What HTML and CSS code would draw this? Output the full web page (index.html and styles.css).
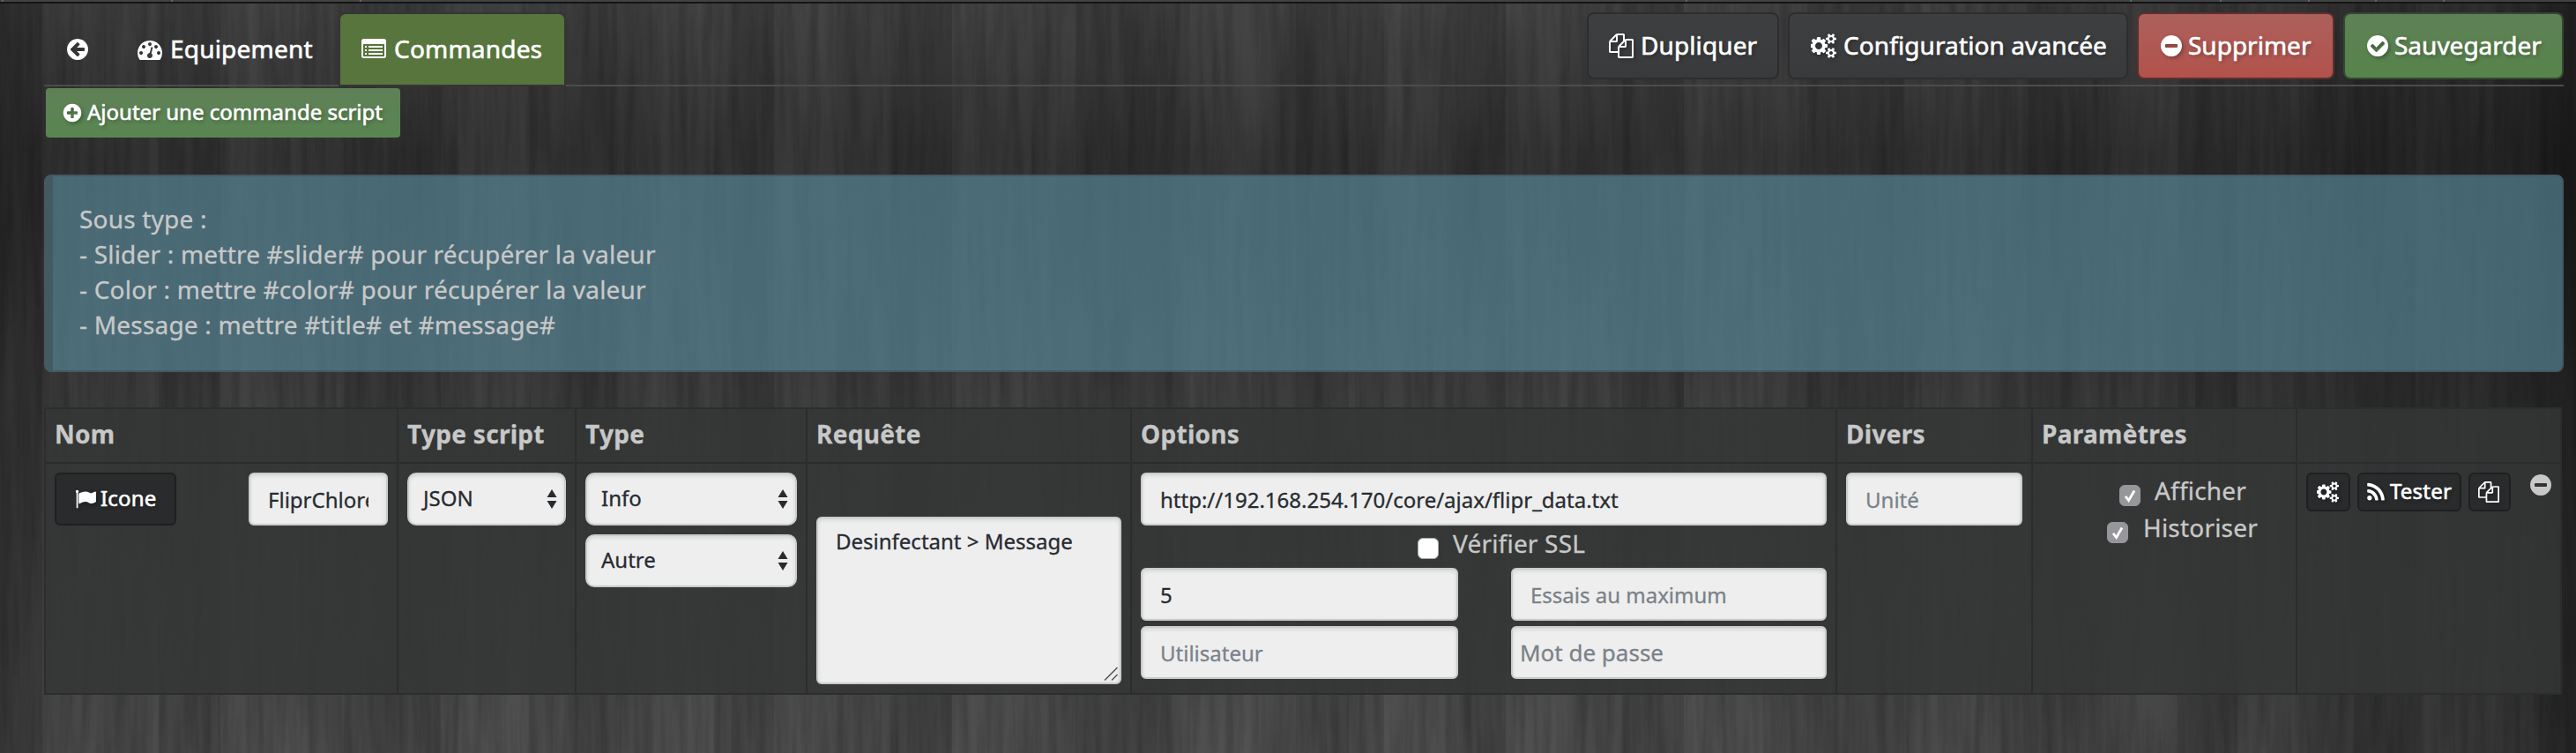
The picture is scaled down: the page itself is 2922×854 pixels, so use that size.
FILE: index.html
```html
<!DOCTYPE html>
<html lang="fr">
<head>
<meta charset="utf-8">
<title>Commandes script</title>
<link rel="stylesheet" href="styles.css">
</head>
<body>
<svg class="defs" width="0" height="0">
  <symbol id="arrow-left" viewBox="0 0 1792 1792"><path d="M1408 960v-128q0-26-19-45t-45-19h-502l189-189q19-19 19-45t-19-45l-91-91q-18-18-45-18t-45 18l-362 362-91 91q-18 18-18 45t18 45l91 91 362 362q18 18 45 18t45-18l91-91q18-18 18-45t-18-45l-189-189h502q26 0 45-19t19-45zm256-64q0 209-103 385.500t-279.500 279.500-385.500 103-385.500-103-279.500-279.500-103-385.500 103-385.500 279.500-279.500 385.500-103 385.500 103 279.500 279.500 103 385.500z"/></symbol>
  <symbol id="plus" viewBox="0 0 1792 1792"><path d="M1344 960v-128q0-26-19-45t-45-19h-256v-256q0-26-19-45t-45-19h-128q-26 0-45 19t-19 45v256h-256q-26 0-45 19t-19 45v128q0 26 19 45t45 19h256v256q0 26 19 45t45 19h128q26 0 45-19t19-45v-256h256q26 0 45-19t19-45zm320-64q0 209-103 385.500t-279.500 279.500-385.500 103-385.500-103-279.500-279.500-103-385.500 103-385.500 279.500-279.500 385.500-103 385.500 103 279.500 279.500 103 385.500z"/></symbol>
  <symbol id="minus" viewBox="0 0 1792 1792"><path d="M1344 960v-128q0-26-19-45t-45-19h-768q-26 0-45 19t-19 45v128q0 26 19 45t45 19h768q26 0 45-19t19-45zm320-64q0 209-103 385.500t-279.500 279.500-385.500 103-385.500-103-279.500-279.500-103-385.500 103-385.500 279.500-279.500 385.500-103 385.500 103 279.500 279.500 103 385.500z"/></symbol>
  <symbol id="check" viewBox="0 0 1792 1792"><path d="M1412 734q0-28-18-46l-91-90q-19-19-45-19t-45 19l-408 407-226-226q-19-19-45-19t-45 19l-91 90q-18 18-18 46 0 27 18 45l362 362q19 19 45 19 27 0 46-19l543-543q18-18 18-45zm252 162q0 209-103 385.500t-279.500 279.500-385.500 103-385.500-103-279.500-279.500-103-385.500 103-385.500 279.500-279.500 385.500-103 385.500 103 279.500 279.500 103 385.500z"/></symbol>
  <symbol id="files" viewBox="0 0 1792 1792"><path d="M1696 384q40 0 68 28t28 68v1216q0 40-28 68t-68 28h-960q-40 0-68-28t-28-68v-288h-544q-40 0-68-28t-28-68v-672q0-40 20-88t48-76l408-408q28-28 76-48t88-20h416q40 0 68 28t28 68v328q68-40 128-40h416zm-544 213l-299 299h299v-299zm-640-384l-299 299h299v-299zm196 647l316-316v-416h-384v416q0 40-28 68t-68 28h-416v640h512v-256q0-40 20-88t48-76zm956 804v-1152h-384v416q0 40-28 68t-68 28h-416v640h896z"/></symbol>
  <symbol id="cogs" viewBox="0 0 1920 1792"><path d="M832 896q0-106-75-181t-181-75-181 75-75 181 75 181 181 75 181-75 75-181zm768 512q0-52-38-90t-90-38-90 38-38 90q0 53 37.500 90.500t90.500 37.500 90.500-37.500 37.500-90.500zm0-1024q0-52-38-90t-90-38-90 38-38 90q0 53 37.500 90.500t90.500 37.500 90.500-37.500 37.500-90.500zm-384 421v185q0 10-7 19.500t-16 10.500l-155 24q-11 35-32 76 34 48 90 115 7 11 7 20 0 12-7 19-23 30-82.500 89.500t-78.500 59.500q-11 0-21-7l-115-90q-37 19-77 31-11 108-23 155-7 24-30 24h-186q-11 0-20-7.500t-10-17.500l-23-153q-34-10-75-31l-118 89q-7 7-20 7-11 0-21-8-144-133-144-160 0-9 7-19 10-14 41-53t47-61q-23-44-35-82l-152-24q-10-1-17-9.500t-7-19.500v-185q0-10 7-19.500t16-10.500l155-24q11-35 32-76-34-48-90-115-7-11-7-20 0-12 7-20 22-30 82-89t79-59q11 0 21 7l115 90q34-18 77-32 11-108 23-154 7-24 30-24h186q11 0 20 7.500t10 17.500l23 153q34 10 75 31l118-89q8-7 20-7 11 0 21 8 144 133 144 160 0 8-7 19-12 16-42 54t-45 60q23 48 34 82l152 23q10 2 17 10.500t7 19.500zm640 533v140q0 16-149 31-12 27-30 52 51 113 51 138 0 4-4 7-122 71-124 71-8 0-46-47t-52-68q-20 2-30 2t-30-2q-14 21-52 68t-46 47q-2 0-124-71-4-3-4-7 0-25 51-138-18-25-30-52-149-15-149-31v-140q0-16 149-31 13-29 30-52-51-113-51-138 0-4 4-7 4-2 35-20t59-34 30-16q8 0 46 46.500t52 67.500q20-2 30-2t30 2q51-71 92-112l6-2q4 0 124 70 4 3 4 7 0 25-51 138 17 23 30 52 149 15 149 31zm0-1024v140q0 16-149 31-12 27-30 52 51 113 51 138 0 4-4 7-122 71-124 71-8 0-46-47t-52-68q-20 2-30 2t-30-2q-14 21-52 68t-46 47q-2 0-124-71-4-3-4-7 0-25 51-138-18-25-30-52-149-15-149-31v-140q0-16 149-31 13-29 30-52-51-113-51-138 0-4 4-7 4-2 35-20t59-34 30-16q8 0 46 46.500t52 67.500q20-2 30-2t30 2q51-71 92-112l6-2q4 0 124 70 4 3 4 7 0 25-51 138 17 23 30 52 149 15 149 31z"/></symbol>
  <symbol id="gauge" viewBox="0 0 1792 1792"><path d="M384 1152q0-53-37.500-90.500t-90.500-37.500-90.500 37.500-37.500 90.500 37.500 90.500 90.500 37.500 90.500-37.500 37.500-90.500zm192-448q0-53-37.500-90.500t-90.500-37.500-90.500 37.500-37.500 90.500 37.500 90.500 90.500 37.500 90.500-37.500 37.500-90.500zm428 481l101-382q6-26-7.500-48.500t-38.500-29.500-48 6.500-30 39.500l-101 382q-60 5-107 43.500t-63 98.500q-20 77 20 146t117 89 146-20 89-117q16-60-6-117t-72-91zm660-33q0-53-37.500-90.500t-90.500-37.500-90.500 37.500-37.500 90.500 37.500 90.500 90.500 37.500 90.500-37.500 37.500-90.500zm-640-640q0-53-37.500-90.500t-90.500-37.500-90.500 37.500-37.500 90.500 37.500 90.500 90.500 37.500 90.500-37.500 37.500-90.500zm448 192q0-53-37.500-90.500t-90.500-37.500-90.500 37.500-37.500 90.500 37.500 90.500 90.500 37.500 90.500-37.500 37.500-90.500zm320 448q0 261-141 483-19 29-54 29h-1402q-35 0-54-29-141-221-141-483 0-182 71-348t191-286 286-191 348-71 348 71 286 191 191 286 71 348z"/></symbol>
  <symbol id="list" viewBox="0 0 1792 1792"><path fill-rule="evenodd" d="M160 128h1472q66 0 113 47t47 113v1088q0 66-47 113t-113 47h-1472q-66 0-113-47t-47-113v-1088q0-66 47-113t113-47zm0 384q-32 0-32 32v832q0 32 32 32h1472q32 0 32-32v-832q0-32-32-32z"/><path d="M256 640h128v128h-128zM256 896h128v128h-128zM256 1152h128v128h-128zM512 640h1024v128h-1024zM512 896h1024v128h-1024zM512 1152h1024v128h-1024z"/></symbol>
  <symbol id="flag" viewBox="0 0 1792 1792"><path d="M320 256q0 72-64 110v1266q0 13-9.500 22.500t-22.500 9.500h-64q-13 0-22.500-9.500t-9.500-22.500v-1266q-64-38-64-110 0-53 37.500-90.500t90.500-37.500 90.500 37.500 37.500 90.500zm1472 64v763q0 25-12.500 38.500t-39.500 27.500q-215 116-369 116-61 0-123.500-22t-108.500-48-115.500-48-142.500-22q-192 0-464 146-17 9-33 9-26 0-45-19t-19-45v-742q0-32 31-55 21-14 79-43 236-120 421-120 107 0 200 29t219 88q38 19 88 19 54 0 117.500-21t110-47 88-47 54.500-21q26 0 45 19t19 45z"/></symbol>
  <symbol id="rss" viewBox="192 0 1408 1792"><path d="M576 1344q0 80-56 136t-136 56-136-56-56-136 56-136 136-56 136 56 56 136zm512 123q2 28-17 48-18 21-47 21h-135q-25 0-43-16.500t-20-41.500q-22-229-184.500-391.500t-391.500-184.500q-25-2-41.500-20t-16.500-43v-135q0-29 21-47 17-17 43-17h5q160 13 306 80.500t259 181.500q114 113 181.500 259t80.500 306zm512 2q2 27-18 47-18 20-46 20h-143q-26 0-44.500-17.500t-19.500-42.500q-12-215-101-408.500t-231.500-336-336-231.500-408.500-102q-25-1-42.500-19.500t-17.500-43.500v-143q0-28 20-46 18-18 44-18h3q262 13 501.500 120t425.500 294q187 186 294 425.500t120 501.500z"/></symbol>
</svg>

<svg class="wood" width="2922" height="854" viewBox="0 0 2922 854">
  <defs>
    <linearGradient id="shade" x1="0" y1="0" x2="0" y2="1">
      <stop offset="0" stop-color="#3f3f3f"/><stop offset=".1" stop-color="#383838"/><stop offset=".2" stop-color="#313131"/>
      <stop offset=".3" stop-color="#323232"/><stop offset=".52" stop-color="#3b3b3b"/><stop offset=".8" stop-color="#434343"/><stop offset="1" stop-color="#494949"/>
    </linearGradient>
    <linearGradient id="sides" x1="0" y1="0" x2="1" y2="0">
      <stop offset="0" stop-color="#000" stop-opacity=".2"/><stop offset=".02" stop-color="#000" stop-opacity=".12"/><stop offset=".06" stop-color="#000" stop-opacity=".02"/>
      <stop offset=".7" stop-color="#000" stop-opacity="0"/><stop offset=".85" stop-color="#000" stop-opacity=".13"/><stop offset=".98" stop-color="#000" stop-opacity=".34"/><stop offset="1" stop-color="#000" stop-opacity=".45"/>
    </linearGradient>
    <filter id="grain" x="0" y="0" width="1" height="1" color-interpolation-filters="sRGB">
      <feTurbulence type="fractalNoise" baseFrequency=".1 .006" numOctaves="4" seed="7"/>
      <feColorMatrix values="0 0 0 0 0  0 0 0 0 0  0 0 0 0 0  .36 0 0 0 -.12"/>
    </filter>
    <filter id="glow" x="0" y="0" width="1" height="1" color-interpolation-filters="sRGB">
      <feTurbulence type="fractalNoise" baseFrequency=".03 .003" numOctaves="3" seed="23"/>
      <feColorMatrix values="0 0 0 0 1  0 0 0 0 1  0 0 0 0 1  .08 0 0 0 -.035"/>
    </filter>
    <pattern id="planks" width="830" height="854" patternUnits="userSpaceOnUse">
      <path fill="#000" fill-opacity=".08" d="M0 0h48v854H0zM180 0h70v854h-70zM390 0h110v854H390zM640 0h60v854h-60z"/>
      <path fill="#fff" fill-opacity=".018" d="M48 0h70v854H48zM250 0h90v854h-90zM520 0h80v854h-80zM740 0h70v854h-70z"/>
    </pattern>
  </defs>
  <rect width="2922" height="854" fill="url(#shade)"/>
  <rect width="2922" height="854" fill="url(#planks)"/>
  <rect width="2922" height="854" filter="url(#grain)"/>
  <rect width="2922" height="854" filter="url(#glow)"/>
  <rect width="2922" height="854" fill="url(#sides)"/>
  <path fill="#414342" d="M0 0h2922v2H0z"/><path fill="#151515" d="M0 2h2922v2H0z"/>
  <path fill="#656565" d="M2 0h2v2h-2zM194 0h2v2h-2zM408 0h2v2h-2zM1912 0h2v2h-2zM2416 0h2v2h-2zM2518 0h2v2h-2zM2618 0h2v2h-2zM2694 0h2v2h-2zM2771 0h2v2h-2z"/>
</svg>

<main class="page">
  <header class="topbar">
    <nav class="tabs">
      <a class="tab tab-back"><svg class="ico"><use href="#arrow-left"/></svg></a>
      <a class="tab tab-equip"><svg class="ico"><use href="#gauge"/></svg><span>Equipement</span></a>
      <a class="tab active"><svg class="ico"><use href="#list"/></svg><span>Commandes</span></a>
    </nav>
    <div class="actions">
      <a class="btn big w-dup"><svg class="ico"><use href="#files"/></svg><span>Dupliquer</span></a>
      <a class="btn big w-conf"><svg class="ico wide"><use href="#cogs"/></svg><span>Configuration avancée</span></a>
      <a class="btn big danger w-sup"><svg class="ico round"><use href="#minus"/></svg><span>Supprimer</span></a>
      <a class="btn big success w-sauv"><svg class="ico round"><use href="#check"/></svg><span>Sauvegarder</span></a>
    </div>
  </header>

  <a class="btn success add"><svg class="ico round"><use href="#plus"/></svg><span>Ajouter une commande script</span></a>

  <section class="alert">
    Sous type :<br>
    - Slider : mettre #slider# pour récupérer la valeur<br>
    - Color : mettre #color# pour récupérer la valeur<br>
    - Message : mettre #title# et #message#
  </section>

  <section class="table">
    <div class="th">Nom</div><div class="th">Type script</div><div class="th">Type</div><div class="th">Requête</div>
    <div class="th">Options</div><div class="th">Divers</div><div class="th">Paramètres</div><div class="th last"></div>

    <div class="td name">
      <a class="btn icone"><svg class="ico"><use href="#flag"/></svg><span>Icone</span></a>
      <div class="field name-field"><span class="clip">FliprChlore</span></div>
    </div>
    <div class="td">
      <div class="field select"><span>JSON</span><svg class="arrows" viewBox="0 0 12 22"><path d="M6 0l5.500 9H.5zM6 22l5.500-9H.5z"/></svg></div>
    </div>
    <div class="td stack">
      <div class="field select"><span>Info</span><svg class="arrows" viewBox="0 0 12 22"><path d="M6 0l5.500 9H.5zM6 22l5.500-9H.5z"/></svg></div>
      <div class="field select"><span>Autre</span><svg class="arrows" viewBox="0 0 12 22"><path d="M6 0l5.500 9H.5zM6 22l5.500-9H.5z"/></svg></div>
    </div>
    <div class="td request">
      <div class="field area"><span>Desinfectant &gt; Message</span><svg class="grip" viewBox="0 0 16 16"><path d="M1 15.500L15.500 1M9 15.500L15.500 9"/></svg></div>
    </div>
    <div class="td">
      <div class="field">http://192.168.254.170/core/ajax/flipr_data.txt</div>
      <label class="check ssl"><i class="box"></i><span>Vérifier SSL</span></label>
      <div class="pairs">
        <div class="field">5</div><div class="field hint">Essais au maximum</div>
        <div class="field hint">Utilisateur</div><div class="field hint password">Mot de passe</div>
      </div>
    </div>
    <div class="td"><div class="field hint unit">Unité</div></div>
    <div class="td params">
      <label class="check show"><i class="box on"><svg viewBox="0 0 24 24"><path d="M6.500 13l4 5 7-12"/></svg></i><span>Afficher</span></label>
      <label class="check hist"><i class="box on"><svg viewBox="0 0 24 24"><path d="M6.500 13l4 5 7-12"/></svg></i><span>Historiser</span></label>
    </div>
    <div class="td last tools">
      <a class="btn xs w-cog"><svg class="ico wide"><use href="#cogs"/></svg></a>
      <a class="btn xs w-test"><svg class="ico rss"><use href="#rss"/></svg><span>Tester</span></a>
      <a class="btn xs w-copy"><svg class="ico"><use href="#files"/></svg></a>
      <svg class="remove"><use href="#minus"/></svg>
    </div>
  </section>
</main>
</body>
</html>
```

FILE: styles.css
```css
* { box-sizing: border-box; }
body {
  margin: 0;
  width: 2922px;
  height: 854px;
  overflow: hidden;
  position: relative;
  background: #333;
  font: 28px/40px "Noto Sans", "Open Sans", sans-serif;
  letter-spacing: .2px;
  -webkit-text-stroke: .3px currentColor;
  color: #c8c8c8;
}
.defs { position: absolute; }
.wood { position: absolute; left: 0; top: 0; }
.page { position: relative; padding: 14px 14px 0 50px; }

.topbar {
  display: flex;
  justify-content: space-between;
  height: 84px;
  background: linear-gradient(#4c4c4c, #4c4c4c) left bottom / 100% 2px no-repeat;
}
.tabs { display: flex; height: 84px; }
.tab {
  display: flex;
  align-items: center;
  color: #fff;
  white-space: nowrap;
  height: 82px;
  padding-top: 2px;
}
.tab-back { padding-left: 24px; width: 106px; }
.tab-equip { width: 228px; }
.tab span { margin: 0 0 2px 9px; -webkit-text-stroke-width: .6px; }
.tab.active {
  width: 258px;
  height: 84px;
  padding: 0 0 0 24px;
  background: #57753c;
  border: 2px solid #353535;
  border-radius: 8px 8px 0 0;
}

.ico { width: 28px; height: 28px; fill: currentColor; flex: none; display: block; }
.ico.wide { width: 30px; }
.btn {
  display: flex;
  align-items: center;
  color: #fff;
  white-space: nowrap;
  border-radius: 8px;
  text-shadow: 2px 2px 4px rgba(0, 0, 0, .3);
  -webkit-text-stroke-width: .6px;
}
.btn .ico { filter: drop-shadow(2px 2px 2px rgba(0, 0, 0, .3)); }
.actions { display: flex; gap: 10px; }
.big {
  height: 76px;
  padding: 0 0 1px 23px;
  border: 2px solid #2c2d2e;
  background: linear-gradient(#3d3f41, #393a3c);
  letter-spacing: .1px;
}
.big span { margin: 0 0 2px 8px; }
.big .round + span { margin-left: 5px; }
.w-dup { width: 218px; }
.w-conf { width: 386px; padding-left: 24px; }
.w-conf span { margin-left: 7px; }
.w-sup { width: 224px; }
.w-sauv { width: 250px; }
.w-sup, .w-sauv { letter-spacing: 0; }
.big.danger { background: linear-gradient(#ad605c, #b2524b); border-color: #5b302e; }
.big.success { background: linear-gradient(#5f8057, #56844a); border-color: #354732; }

.add {
  margin: 2px 0 0 2px;
  width: 402px;
  height: 56px;
  font-size: 24px;
  letter-spacing: 0;
  padding-left: 18px;
  border-radius: 4px;
  background: linear-gradient(#5f8057, #598651);
}
.add .ico { width: 24px; height: 24px; }
.add span { margin: 0 0 3px 5px; }

.alert {
  margin-top: 42px;
  height: 224px;
  border: 2px solid #435a60;
  border-left-width: 10px;
  border-radius: 8px;
  background: rgba(88, 137, 155, .66);
  padding: 28px 30px;
  white-space: nowrap;
}

.table {
  margin-top: 40px;
  width: 2856px;
  height: 326px;
  display: grid;
  grid-template-columns: 400px 202px 262px 368px 800px 222px 300px 298px;
  grid-template-rows: 62px 260px;
  border: 2px solid #2c2e2d;
  background: rgba(52, 55, 53, .86);
}
.th, .td { border-right: 2px solid #2b2d2c; padding: 10px; min-width: 0; }
.th { border-bottom: 2px solid #2b2d2c; font-weight: bold; white-space: nowrap; padding-top: 8px; letter-spacing: .3px; }
.last { border-right: 0; }

.field {
  height: 60px;
  border: 2px solid #c9cccb;
  border-radius: 6px;
  background: #eee;
  box-shadow: inset 0 2px 4px rgba(0, 0, 0, .1);
  color: #272b30;
  font-size: 24px;
  letter-spacing: 0;
  line-height: 58px;
  padding: 0 20px;
  white-space: nowrap;
}
.hint { color: #7a8288; }
.name { display: flex; justify-content: space-between; }
.icone {
  width: 138px;
  height: 60px;
  padding-left: 21px;
  font-size: 24px;
  border: 2px solid #1e1f20;
  background: #2a2b2d;
  border-radius: 6px;
}
.icone .ico { width: 24px; height: 24px; }
.icone span { margin: 0 0 2px 5px; }
.name-field { width: 158px; }
.clip { display: block; overflow: hidden; }
.select { display: flex; justify-content: space-between; border-radius: 10px; padding: 0 8px 0 16px; line-height: 53px; }
.arrows { width: 12px; height: 22px; margin-top: 17px; fill: #272b30; }
.stack { display: flex; flex-direction: column; gap: 10px; }
.request { padding-top: 60px; }
.area { height: 190px; display: flex; justify-content: space-between; align-items: flex-end; padding-right: 2px; line-height: 52px; }
.area span { align-self: flex-start; }
.grip { width: 16px; height: 16px; stroke: #555; stroke-width: 1.500; fill: none; margin-bottom: 2px; }

.check { display: flex; align-items: flex-start; white-space: nowrap; }
.box { width: 24px; height: 24px; border-radius: 6px; background: #fff; border: 1px solid #aaa; margin-top: 14px; flex: none; }
.box.on { background: #97969b; border-color: #97969b; }
.box svg { display: block; width: 22px; height: 22px; fill: none; stroke: #fff; stroke-width: 3; }
.ssl { height: 48px; padding-left: 314px; }
.ssl span { margin-left: 16px; }
.pairs { display: grid; grid-template-columns: 360px 358px; column-gap: 60px; row-gap: 6px; }
.password { padding-left: 8px; font-size: 26px; line-height: 56px; }
.unit { width: 200px; }
.params { padding: 10px 0 0; }
.params .check { height: 42px; }
.params span { margin-left: 16px; }
.show { padding-left: 98px; }
.hist { padding-left: 84px; }
.params .hist span { margin-left: 17px; }

.tools { display: flex; align-items: flex-start; padding-right: 0; }
.xs { height: 44px; font-size: 24px; padding-left: 10px; border: 2px solid #1e1f20; background: #2a2b2d; border-radius: 6px; margin-right: 8px; }
.xs .ico { width: 24px; height: 24px; }
.xs .ico.wide { width: 26px; }
.xs .ico.rss { width: 20px; height: 25px; margin-left: -1px; }
.xs span { margin: 0 0 3px 6px; }
.w-cog { width: 50px; }
.w-test { width: 118px; }
.w-copy { width: 48px; padding-left: 9px; }
.remove { width: 28px; height: 28px; fill: #c8c8c8; margin-left: 12px; }
```
